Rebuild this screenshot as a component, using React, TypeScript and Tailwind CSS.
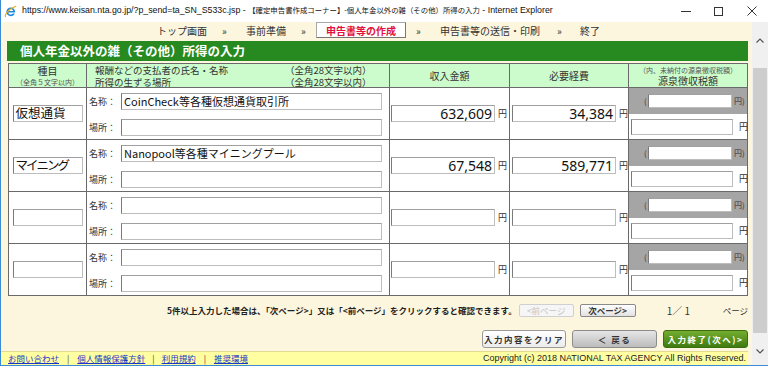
import React from 'react';

const rows = [
  { kind: '仮想通貨', kindCls: '', name: 'CoinCheck等各種仮想通貨取引所', income: '632,609', expense: '34,384' },
  { kind: 'マイニング', kindCls: 'tracking-[-2px]', name: 'Nanopool等各種マイニングプール', income: '67,548', expense: '589,771' },
  { kind: '', kindCls: '', name: '', income: '', expense: '' },
  { kind: '', kindCls: '', name: '', income: '', expense: '' },
];

function Field({ className = '', children }: { className?: string; children?: React.ReactNode }) {
  return (
    <div
      className={`flex items-center shrink-0 leading-none bg-white border border-[#bdbdbd] border-l-[#7a7a7a] border-t-[#a0a0a0] whitespace-nowrap ${className}`}
    >
      {children}
    </div>
  );
}

function IeLogo() {
  return (
    <svg width="13" height="13" viewBox="0 0 16 16" className="ml-[3px] shrink-0">
      <path
        fillRule="evenodd"
        fill="#1d8ae0"
        d="M13.6 9.1H5.3c.2 1.6 1.4 2.7 3 2.7 1.1 0 2-.5 2.6-1.3h2.5c-.9 2-2.8 3.3-5.1 3.3-3 0-5.4-2.4-5.4-5.4S5.3 3 8.3 3s5.4 2.4 5.4 5.4v.7zM5.4 7.4h5.8c-.2-1.5-1.4-2.5-2.9-2.5S5.6 5.9 5.4 7.4z"
      />
      <path d="M1.8 14.2C.4 12.4 6.5 4.2 14.6 1.6" stroke="#f2a900" strokeWidth="1.4" fill="none" strokeLinecap="round" />
    </svg>
  );
}

export default function App() {
  return (
    <div className="w-[768px] h-[366px] overflow-hidden flex flex-col bg-white border-l border-b border-[#3a8ad6] font-['Noto_Sans_CJK_JP',sans-serif] text-[#222]">
      {/* Title bar */}
      <div className="h-[22px] shrink-0 flex items-center bg-white">
        <IeLogo />
        <span className="ml-[5px] text-[8.8px] text-[#111] whitespace-nowrap font-['Liberation_Sans','Noto_Sans_CJK_JP',sans-serif]">
          https://www.keisan.nta.go.jp/?p_send=ta_SN_S533c.jsp -{' '}
          <span className="text-[7.4px] font-['Noto_Sans_CJK_JP',sans-serif]">
            【確定申告書作成コーナー】-個人年金以外の雑（その他）所得の入力
          </span>{' '}
          - Internet Explorer
        </span>
        <div className="ml-auto flex h-full">
          <div className="w-[33px] flex items-center justify-center">
            <div className="w-[10px] h-px bg-[#333]"></div>
          </div>
          <div className="w-[33px] flex items-center justify-center">
            <div className="w-[9px] h-[9px] border border-[#333]"></div>
          </div>
          <div className="w-[33px] flex items-center justify-center">
            <svg width="10" height="10" viewBox="0 0 10 10">
              <path d="M0.5 0.5L9.5 9.5M9.5 0.5L0.5 9.5" stroke="#333" strokeWidth="1" />
            </svg>
          </div>
        </div>
      </div>

      <div className="h-[343px] flex">
        {/* Page */}
        <div className="flex-1 flex flex-col bg-[#fdf6df]">
          {/* Navigation */}
          <div className="h-[16px] flex items-center text-[10px] text-[#333] whitespace-nowrap pl-[156px]">
            <span className="w-[65px]">トップ画面</span>
            <span className="w-[24px]">»</span>
            <span className="w-[55px]">事前準備</span>
            <span className="w-[15px]">»</span>
            <span className="w-[90px] h-[16px] flex items-center justify-center bg-white border border-[#a8a8a8] border-r-[#777] border-b-[#777] text-[#e2103c] font-bold">
              申告書等の作成
            </span>
            <span className="w-[34px] pl-[10px]">»</span>
            <span className="w-[117px]">申告書等の送信・印刷</span>
            <span className="w-[23px]">»</span>
            <span>終了</span>
          </div>

          <div className="pl-[6px] pr-[4px] flex flex-col">
            {/* Heading */}
            <div className="mt-[3px] h-[20px] bg-[#268a21] flex items-center pl-[13px] text-white text-[12.5px] font-bold">
              個人年金以外の雑（その他）所得の入力
            </div>

            {/* Table */}
            <div className="mt-[2px] ml-[1px] grid grid-cols-[78px_303px_120px_119px_119px] border-l border-t border-[#6a6a6a] bg-white leading-none">
              <div className="h-[24px] border-r border-b border-[#6a6a6a] bg-[#ccfccc] flex flex-col items-center justify-center gap-[2px]">
                <span className="text-[10px] leading-[10px] text-[#333]">種目</span>
                <span className="text-[7px] leading-[8px] text-[#555]">（全角５文字以内）</span>
              </div>
              <div className="h-[24px] border-r border-b border-[#6a6a6a] bg-[#ccfccc] flex flex-col justify-center pl-[8px] text-[9.5px] leading-[10px] text-[#333] gap-[2px]">
                <div className="flex">
                  <span className="w-[190px]">報酬などの支払者の氏名・名称</span>
                  <span>（全角28文字以内）</span>
                </div>
                <div className="flex">
                  <span className="w-[190px]">所得の生ずる場所</span>
                  <span>（全角28文字以内）</span>
                </div>
              </div>
              <div className="h-[24px] border-r border-b border-[#6a6a6a] bg-[#ccfccc] flex items-center justify-center text-[10px] text-[#333]">
                収入金額
              </div>
              <div className="h-[24px] border-r border-b border-[#6a6a6a] bg-[#ccfccc] flex items-center justify-center text-[10px] text-[#333]">
                必要経費
              </div>
              <div className="h-[24px] border-r border-b border-[#6a6a6a] bg-[#ccfccc] flex flex-col items-center justify-center gap-[2px]">
                <span className="text-[7px] leading-[8px] text-[#555]">（内、未納付の源泉徴収税額）</span>
                <span className="text-[10px] leading-[10px] text-[#333]">源泉徴収税額</span>
              </div>

              {rows.map((r, i) => (
                <React.Fragment key={i}>
                  <div className="h-[52px] border-r border-b border-[#6a6a6a] flex items-center justify-center">
                    <Field className={`w-[70px] h-[17px] pl-[2px] text-[12.5px] text-[#111] ${r.kindCls}`}>{r.kind}</Field>
                  </div>
                  <div className="h-[52px] border-r border-b border-[#6a6a6a] flex flex-col pt-[5px] gap-[9px] pl-[2px]">
                    <div className="flex items-center">
                      <span className="w-[32px] text-[9px] text-[#333]">名称：</span>
                      <Field className="w-[261px] h-[17px] pl-[2px] text-[11px] text-[#111]">{r.name}</Field>
                    </div>
                    <div className="flex items-center">
                      <span className="w-[32px] text-[9px] text-[#333]">場所：</span>
                      <Field className="w-[261px] h-[17px]" />
                    </div>
                  </div>
                  <div className="h-[52px] border-r border-b border-[#6a6a6a] flex items-center pl-[1px]">
                    <Field className="w-[104px] h-[17px] justify-end pr-[2px] text-[14px] text-[#111] font-['Noto_Sans',sans-serif]">
                      {r.income}
                    </Field>
                    <span className="ml-[3px] text-[9px] text-[#333]">円</span>
                  </div>
                  <div className="h-[52px] border-r border-b border-[#6a6a6a] flex items-center pl-[2px]">
                    <Field className="w-[104px] h-[17px] justify-end pr-[2px] text-[14px] text-[#111] font-['Noto_Sans',sans-serif]">
                      {r.expense}
                    </Field>
                    <span className="ml-[3px] text-[9px] text-[#333]">円</span>
                  </div>
                  <div className="h-[52px] border-r border-b border-[#6a6a6a] flex flex-col">
                    <div className="h-[26px] bg-[#a5a5a5] flex items-center pl-[15px] text-[8px] text-[#333]">
                      <span className="w-[4px]">(</span>
                      <Field className="w-[84px] h-[14px]" />
                      <span className="ml-[2px]">円)</span>
                    </div>
                    <div className="flex-1 flex items-center pl-[2px]">
                      <Field className="w-[102px] h-[16px]" />
                      <span className="ml-[6px] text-[9px] text-[#333]">円</span>
                    </div>
                  </div>
                </React.Fragment>
              ))}
            </div>

            {/* Paging */}
            <div className="mt-[7px] h-[14px] flex items-center justify-end text-[#222] whitespace-nowrap">
              <span className="text-[8.5px] font-bold">
                5件以上入力した場合は、「次ページ&gt;」又は「&lt;前ページ」をクリックすると確認できます。
              </span>
              <span className="ml-[2px] w-[55px] h-[13px] flex items-center justify-center border border-[#d0d0d0] bg-[#f6f6f6] text-[8.5px] text-[#c4c4c4] rounded-[2px]">
                &lt;前ページ
              </span>
              <span className="ml-[6px] w-[56px] h-[13px] flex items-center justify-center border border-[#8a8a8a] bg-gradient-to-b from-white to-[#e2e2e2] text-[8.5px] text-[#333] font-bold rounded-[2px]">
                次ページ&gt;
              </span>
              <span className="ml-[31px] w-[31px] text-[10px] text-[#333]">1／ 1</span>
              <span className="ml-[25px] text-[8.5px] text-[#333]">ページ</span>
            </div>

            {/* Buttons */}
            <div className="mt-[13px] h-[18px] flex justify-end gap-[6px] text-[8.5px] font-bold tracking-[1.5px] whitespace-nowrap">
              <span className="w-[84px] h-[18px] flex items-center justify-center border border-[#9a9a9a] rounded-[3px] bg-gradient-to-b from-white to-[#ececec] text-[#333]">
                入力内容をクリア
              </span>
              <span className="w-[85px] h-[18px] flex items-center justify-center border border-[#8c8c8c] rounded-[3px] bg-gradient-to-b from-[#e6e6e6] to-[#bcbcbc] text-[#333]">
                ＜ 戻る
              </span>
              <span className="w-[85px] h-[18px] flex items-center justify-center border border-[#3c6e10] rounded-[3px] bg-gradient-to-b from-[#74ad30] to-[#3e7c0f] text-white">
                入力終了(次へ)&gt;
              </span>
            </div>
          </div>

          {/* Footer */}
          <div className="mt-auto mr-[4px] h-[14px] bg-[#ffffa2] border-t border-[#e3da8e] flex items-center pl-[7px] pr-[2px] text-[8.5px] whitespace-nowrap">
            <span className="underline text-[#1a35c8]">お問い合わせ</span>
            <span className="mx-[8px] text-[#333]">|</span>
            <span className="underline text-[#1a35c8]">個人情報保護方針</span>
            <span className="mx-[7px] text-[#333]">|</span>
            <span className="underline text-[#1a35c8]">利用規約</span>
            <span className="mx-[8px] text-[#333]">|</span>
            <span className="underline text-[#1a35c8]">推奨環境</span>
            <span className="ml-auto text-[9px] text-[#222] font-['Liberation_Sans',sans-serif]">
              Copyright (c) 2018 NATIONAL TAX AGENCY All Rights Reserved.
            </span>
          </div>
        </div>

        {/* Scrollbar */}
        <div className="w-[16px] shrink-0 bg-[#f0f0f0] flex flex-col">
          <div className="h-[10px]"></div>
          <div className="h-[16px] flex items-center justify-center">
            <svg width="8" height="5" viewBox="0 0 8 5">
              <path d="M0.5 4.5L4 1L7.5 4.5" stroke="#555" strokeWidth="1.2" fill="none" />
            </svg>
          </div>
          <div className="h-[20px]"></div>
          <div className="h-[265px] mx-[1px] bg-[#cdcdcd]"></div>
          <div className="flex-1"></div>
          <div className="h-[16px] flex items-center justify-center">
            <svg width="8" height="5" viewBox="0 0 8 5">
              <path d="M0.5 0.5L4 4L7.5 0.5" stroke="#555" strokeWidth="1.2" fill="none" />
            </svg>
          </div>
          <div className="h-[6px]"></div>
        </div>
      </div>
    </div>
  );
}
